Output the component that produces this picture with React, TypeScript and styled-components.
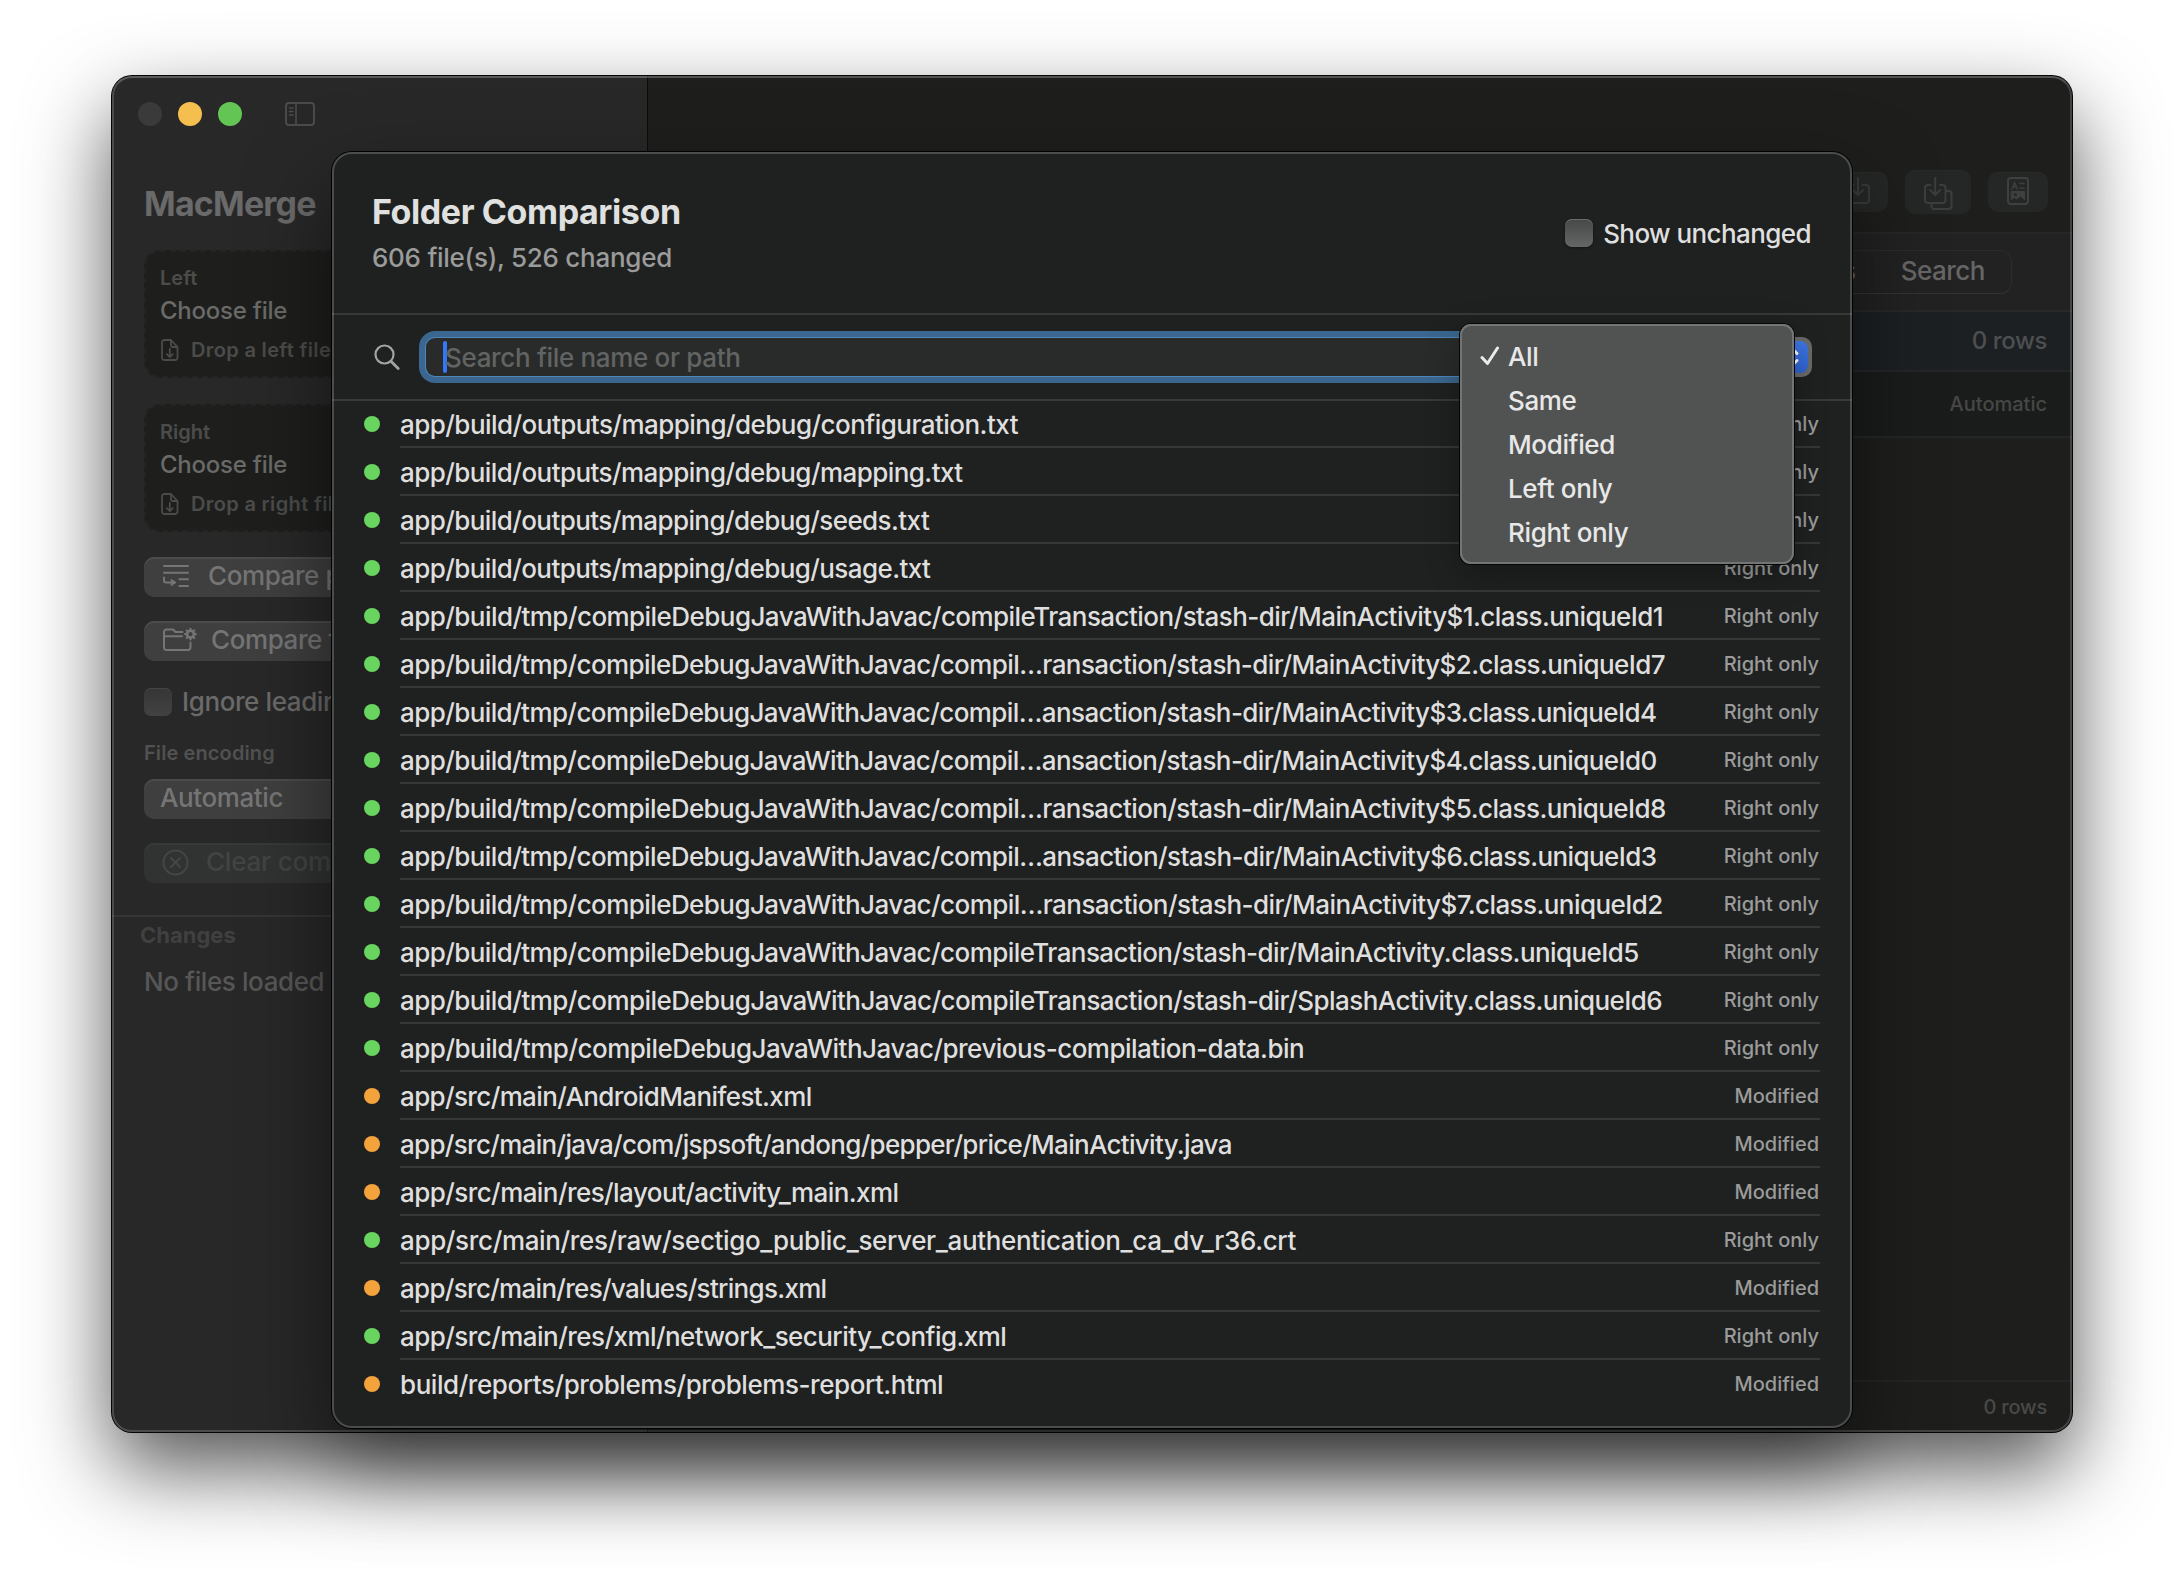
import React from "react";
import styled, { createGlobalStyle } from "styled-components";

const GlobalStyle = createGlobalStyle`
  * { box-sizing: border-box; }
  html, body { margin: 0; padding: 0; background: #fff; }
  body { font-family: Inter, "Liberation Sans", sans-serif; overflow: hidden; }
`;

const Desktop = styled.div`
  position: relative;
  width: 2184px;
  height: 1580px;
  padding: 76px 112px 148px;
  background: #fff;
  overflow: hidden;
`;

const AppWindow = styled.div`
  position: relative;
  display: flex;
  width: 1960px;
  height: 1356px;
  border-radius: 20px;
  background: #1e1f1c;
  box-shadow: 0 0 0 1px #050505, 0 36px 84px rgba(0, 0, 0, 0.68);
  &::after {
    content: "";
    position: absolute;
    inset: 0;
    border-radius: 20px;
    border: 2px solid rgba(255, 255, 255, 0.17);
    border-top-color: rgba(255, 255, 255, 0.24);
    pointer-events: none;
  }
`;

const Text = styled.span<{ $size?: number; $line?: number; $color?: string; $weight?: number; $spacing?: number }>`
  font-size: ${(p) => p.$size ?? 26}px;
  line-height: ${(p) => p.$line ?? 32}px;
  color: ${(p) => p.$color ?? "#dfdfdf"};
  font-weight: ${(p) => p.$weight ?? 450};
  letter-spacing: ${(p) => p.$spacing ?? 0}px;
  white-space: nowrap;
`;

/* ---------- sidebar ---------- */

const Sidebar = styled.aside`
  display: flex;
  flex-direction: column;
  width: 536px;
  background: #282828;
  border-right: 1px solid #0c0c0c;
  border-radius: 20px 0 0 20px;
`;

const TitleBar = styled.div`
  display: flex;
  align-items: center;
  gap: 16px;
  height: 76px;
  padding-left: 26px;
  svg { margin-left: 27px; }
`;

const Light = styled.i<{ $color: string }>`
  width: 24px;
  height: 24px;
  border-radius: 50%;
  background: ${(p) => p.$color};
`;

const Controls = styled.div`
  display: flex;
  flex-direction: column;
  padding: 32px 32px 32px;
  border-bottom: 2px solid #343535;
`;

const DropCard = styled.div<{ $top: number }>`
  display: flex;
  flex-direction: column;
  height: 128px;
  margin-top: ${(p) => p.$top}px;
  padding: 14px 14px 0;
  border: 2px dashed #242523;
  border-radius: 16px;
  background: #1e1f1d;
`;

const CardTitle = styled(Text)`
  margin-top: 6px;
`;

const DropHint = styled.div`
  display: flex;
  align-items: center;
  gap: 12px;
  margin-top: 12px;
  padding-left: 1px;
`;

const SideButton = styled.div<{ $top: number; $dim?: boolean; $gap?: number }>`
  display: flex;
  align-items: center;
  gap: ${(p) => p.$gap ?? 0}px;
  height: 40px;
  margin-top: ${(p) => p.$top}px;
  padding: 0 ${(p) => (p.$gap ? 18 : 16)}px 2px;
  border-radius: 10px;
  background: ${(p) => (p.$dim ? "#303332" : "#3f3f3f")};
  box-shadow: inset 0 2px 0 ${(p) => (p.$dim ? "#363938" : "#4b4b4b")};
`;

const CheckRow = styled.div<{ $top?: number; $gap: number }>`
  display: flex;
  align-items: center;
  gap: ${(p) => p.$gap}px;
  height: 28px;
  margin-top: ${(p) => p.$top ?? 0}px;
`;

const Checkbox = styled.i<{ $bright?: boolean }>`
  width: 28px;
  height: 28px;
  border-radius: 7px;
  background: ${(p) => (p.$bright ? "linear-gradient(#464747, #656666)" : "linear-gradient(#363636, #424242)")};
  box-shadow: ${(p) => (p.$bright ? "inset 0 1px 0 #6a6b6a, 0 1px 3px rgba(0,0,0,.4)" : "inset 0 1px 0 #444")};
`;

const FieldLabel = styled(Text)`
  margin: 25px 0 14px;
`;

const Changes = styled.div`
  display: flex;
  flex-direction: column;
  gap: 17px;
  padding: 4px 0 0 32px;
  span:first-child { margin-left: -4px; }
`;

/* ---------- main pane ---------- */

const Main = styled.main`
  display: flex;
  flex-direction: column;
  flex: 1;
  border-radius: 0 20px 20px 0;
  overflow: hidden;
`;

const Toolbar = styled.div`
  display: flex;
  align-items: center;
  justify-content: flex-end;
  gap: 17px;
  height: 158px;
  padding: 76px 24px 0 0;
  border-bottom: 2px solid #252726;
`;

const ToolButton = styled.div<{ $large?: boolean }>`
  display: flex;
  align-items: center;
  justify-content: center;
  width: ${(p) => (p.$large ? 66 : 60)}px;
  height: ${(p) => (p.$large ? 44 : 40)}px;
  border-radius: 10px;
  background: #252726;
  box-shadow: inset 0 1px 0 #292b2a;
`;

const TabBar = styled.div`
  display: flex;
  align-items: center;
  justify-content: flex-end;
  height: 78px;
  padding-right: 60px;
  background: #222222;
  border-bottom: 2px solid #272929;
`;

const Tabs = styled.div`
  display: flex;
  align-items: center;
  height: 44px;
  border: 1px solid #2b2c2c;
  border-bottom-color: #343434;
  border-radius: 12px;
`;

const Tab = styled.div<{ $first?: boolean }>`
  padding: ${(p) => (p.$first ? "0 15px 0 28px" : "0 26px 0 28px")};
  border-left: ${(p) => (p.$first ? "0" : "2px solid #202020")};
  line-height: 30px;
`;

const InfoRow = styled.div<{ $bg: string; $height: number }>`
  display: flex;
  align-items: center;
  justify-content: flex-end;
  height: ${(p) => p.$height}px;
  padding-right: 25px;
  background: ${(p) => p.$bg};
  border-bottom: 2px solid #252726;
`;

const Footer = styled.div`
  display: flex;
  align-items: center;
  justify-content: flex-end;
  height: 52px;
  margin-top: auto;
  padding: 0 25px 1px 0;
  border-top: 2px solid #242525;
`;

/* ---------- sheet ---------- */

const Sheet = styled.section`
  position: absolute;
  left: 332px;
  top: 152px;
  width: 1520px;
  height: 1276px;
  display: flex;
  flex-direction: column;
  border-radius: 20px;
  background: #1f2120;
  box-shadow: 0 0 0 1px #000, 0 36px 84px rgba(0, 0, 0, 0.5);
  &::after {
    content: "";
    position: absolute;
    inset: 0;
    border-radius: 20px;
    border: 2px solid rgba(255, 255, 255, 0.2);
    pointer-events: none;
  }
`;

const SheetHeader = styled.header`
  display: flex;
  justify-content: space-between;
  height: 163px;
  padding: 40px 41px 0 40px;
  border-bottom: 2px solid #373938;
  ${CheckRow} { margin-top: 27px; }
  ${CheckRow} ${Text} { padding-top: 1px; }
`;

const Heading = styled.div`
  display: flex;
  flex-direction: column;
  gap: 10px;
`;

const FilterRow = styled.div`
  display: flex;
  align-items: center;
  height: 86px;
  padding: 0 40px 0 42px;
  border-bottom: 2px solid #373938;
`;

const SearchField = styled.div`
  display: flex;
  align-items: center;
  width: 1052px;
  height: 38px;
  margin-left: 26px;
  padding-left: 17px;
  border-radius: 9px;
  background: #292b2a;
  box-shadow: 0 0 0 1px #4f86b8, 0 0 0 7px #3a668f;
  ${Text} { padding-top: 1px; }
`;

const Caret = styled.i`
  width: 4px;
  height: 32px;
  margin-right: -2px;
  border-radius: 2px;
  background: #3478f6;
`;

const PopUp = styled.div`
  display: flex;
  justify-content: flex-end;
  align-items: center;
  width: 300px;
  height: 40px;
  margin-left: auto;
  padding-right: 4px;
  border-radius: 10px;
  background: #6a6b6a;
`;

const PopUpArrows = styled.div`
  display: flex;
  align-items: center;
  justify-content: center;
  width: 32px;
  height: 32px;
  border-radius: 8px;
  background: linear-gradient(#3f78e8, #2f64d2);
`;

const List = styled.div`
  display: flex;
  flex-direction: column;
  margin-top: -1px;
  padding: 0 32px;
`;

const Row = styled.div`
  display: flex;
  align-items: center;
  gap: 20px;
  height: 48px;
`;

const Dot = styled.i<{ $kind: string }>`
  width: 16px;
  height: 16px;
  border-radius: 50%;
  background: ${(p) => (p.$kind === "Modified" ? "#f2a33c" : "#69d45f")};
`;

const RowBody = styled.div`
  display: flex;
  align-items: center;
  justify-content: space-between;
  flex: 1;
  height: 48px;
  padding-right: 1px;
  box-shadow: inset 0 -2px 0 #363837;
  ${Row}:last-child & { box-shadow: none; }
`;

const Path = styled(Text)`
  padding-top: 2px;
`;

const Menu = styled.div`
  position: absolute;
  left: 1460px;
  top: 324px;
  width: 334px;
  height: 240px;
  display: flex;
  flex-direction: column;
  padding: 10px 19px;
  border-radius: 11px;
  background: #515352;
  box-shadow: inset 0 0 0 2px #737574, 0 0 0 1px #050505, 0 10px 34px rgba(0, 0, 0, 0.3);
`;

const MenuItem = styled.div`
  display: flex;
  align-items: center;
  height: 44px;
  ${Text} { padding-top: 1px; }
`;

const CheckSlot = styled.div`
  display: flex;
  width: 29px;
  padding-left: 1px;
`;

const Stroke = ({ w, h, color, sw = 2, children }: { w: number; h: number; color: string; sw?: number; children: React.ReactNode }) => (
  <svg width={w} height={h} viewBox={`0 0 ${w} ${h}`} fill="none" stroke={color} strokeWidth={sw} strokeLinecap="round" strokeLinejoin="round">
    {children}
  </svg>
);

const DocArrow = () => (
  <Stroke w={18} h={22} color="#4b4b4a" sw={1.8}>
    <path d="M3.5 1H10l6.5 7v10.5a2.5 2.5 0 0 1-2.5 2.5H3.5A2.5 2.5 0 0 1 1 18.5v-15A2.5 2.5 0 0 1 3.5 1zM10 1v5.5a1.5 1.5 0 0 0 1.5 1.5h5M8.8 10v8M5.8 15.2l3 2.900 3-2.900" />
  </Stroke>
);

/* path, status, letter tracking */
const files: [string, string, number][] = [
  ["app/build/outputs/mapping/debug/configuration.txt", "Right only", -0.54],
  ["app/build/outputs/mapping/debug/mapping.txt", "Right only", -0.56],
  ["app/build/outputs/mapping/debug/seeds.txt", "Right only", -0.58],
  ["app/build/outputs/mapping/debug/usage.txt", "Right only", -0.58],
  ["app/build/tmp/compileDebugJavaWithJavac/compileTransaction/stash-dir/MainActivity$1.class.uniqueId1", "Right only", -0.55],
  ["app/build/tmp/compileDebugJavaWithJavac/compil…ransaction/stash-dir/MainActivity$2.class.uniqueId7", "Right only", -0.58],
  ["app/build/tmp/compileDebugJavaWithJavac/compil…ansaction/stash-dir/MainActivity$3.class.uniqueId4", "Right only", -0.59],
  ["app/build/tmp/compileDebugJavaWithJavac/compil…ansaction/stash-dir/MainActivity$4.class.uniqueId0", "Right only", -0.59],
  ["app/build/tmp/compileDebugJavaWithJavac/compil…ransaction/stash-dir/MainActivity$5.class.uniqueId8", "Right only", -0.58],
  ["app/build/tmp/compileDebugJavaWithJavac/compil…ansaction/stash-dir/MainActivity$6.class.uniqueId3", "Right only", -0.58],
  ["app/build/tmp/compileDebugJavaWithJavac/compil…ransaction/stash-dir/MainActivity$7.class.uniqueId2", "Right only", -0.57],
  ["app/build/tmp/compileDebugJavaWithJavac/compileTransaction/stash-dir/MainActivity.class.uniqueId5", "Right only", -0.57],
  ["app/build/tmp/compileDebugJavaWithJavac/compileTransaction/stash-dir/SplashActivity.class.uniqueId6", "Right only", -0.56],
  ["app/build/tmp/compileDebugJavaWithJavac/previous-compilation-data.bin", "Right only", -0.51],
  ["app/src/main/AndroidManifest.xml", "Modified", -0.63],
  ["app/src/main/java/com/jspsoft/andong/pepper/price/MainActivity.java", "Modified", -0.69],
  ["app/src/main/res/layout/activity_main.xml", "Modified", -0.57],
  ["app/src/main/res/raw/sectigo_public_server_authentication_ca_dv_r36.crt", "Right only", -0.35],
  ["app/src/main/res/values/strings.xml", "Modified", -0.7],
  ["app/src/main/res/xml/network_security_config.xml", "Right only", -0.55],
  ["build/reports/problems/problems-report.html", "Modified", -0.44],
];

const filters = ["All", "Same", "Modified", "Left only", "Right only"];

const gearTeeth = [0, 45, 90, 135, 180, 225, 270, 315];

const sides = [
  { name: "Left", hint: "Drop a left file" },
  { name: "Right", hint: "Drop a right file" },
];

export default function App() {
  return (
    <Desktop>
      <GlobalStyle />
      <AppWindow>
        <Sidebar>
          <TitleBar>
            <Light $color="#3a3a3a" />
            <Light $color="#f5bf4f" />
            <Light $color="#62c554" />
            <Stroke w={30} h={24} color="#4b4b4b">
              <rect x="1" y="1" width="28" height="22" rx="3" />
              <path d="M11 1v22M4.5 6h3.500M4.5 9.500h3.500M4.5 13h3.500" strokeWidth="1.6" />
            </Stroke>
          </TitleBar>
          <Controls>
            <Text $size={34} $line={40} $weight={700} $color="#6a6a6a" $spacing={-0.8}>MacMerge</Text>
            {sides.map((side) => (
              <DropCard key={side.name} $top={26}>
                <Text $size={20} $line={24} $weight={600} $color="#4c4c4b">{side.name}</Text>
                <CardTitle $size={24} $line={30} $color="#6a6a69" $spacing={-0.25}>Choose file</CardTitle>
                <DropHint>
                  <DocArrow />
                  <Text $size={20} $line={24} $weight={600} $color="#4c4c4b" $spacing={0.35}>{side.hint}</Text>
                </DropHint>
              </DropCard>
            ))}
            <SideButton $top={25} $gap={18}>
              <Stroke w={28} h={24} color="#757575">
                <path d="M2 2h24M2 8.700h24M17.500 15.300h8.500M17.500 22h8.500" />
                <path d="M2 13.500v3a2 2 0 0 0 2 2h6" />
                <path d="M9.500 15.500l4.500 3-4.500 3z" fill="#757575" strokeWidth="1" />
              </Stroke>
              <Text $color="#757575" $spacing={-0.4}>Compare panes</Text>
            </SideButton>
            <SideButton $top={24} $gap={14}>
              <Stroke w={35} h={26} color="#757575">
                <path d="M20.500 5h-7l-2.500-2.500H4.500A2.500 2.500 0 0 0 2 5v15.500A2.500 2.500 0 0 0 4.500 23h21.500a2.500 2.500 0 0 0 2.500-2.500V15.500M2 9.200h18" />
                <circle cx="28.500" cy="7.200" r="3.400" strokeWidth="2.600" />
                {gearTeeth.map((a) => (
                  <path key={a} d="M28.500 2.400V1.900" strokeWidth="2.200" transform={`rotate(${a} 28.500 7.200)`} />
                ))}
              </Stroke>
              <Text $color="#757575" $spacing={-0.4}>Compare folders</Text>
            </SideButton>
            <CheckRow $top={27} $gap={10}>
              <Checkbox />
              <Text $color="#6a6a6a" $spacing={-0.4}>Ignore leading</Text>
            </CheckRow>
            <FieldLabel $size={20} $line={24} $weight={600} $color="#515151" $spacing={0.1}>File encoding</FieldLabel>
            <SideButton $top={0}>
              <Text $color="#757575" $spacing={-0.4}>Automatic</Text>
            </SideButton>
            <SideButton $top={24} $gap={17} $dim>
              <Stroke w={27} h={27} color="#444646">
                <circle cx="13.500" cy="13.500" r="12" />
                <path d="M9 9l9 9M18 9l-9 9" />
              </Stroke>
              <Text $color="#424444" $spacing={-0.2}>Clear comparison</Text>
            </SideButton>
          </Controls>
          <Changes>
            <Text $size={22} $line={28} $weight={650} $color="#404040">Changes</Text>
            <Text $color="#575757" $spacing={-0.4}>No files loaded</Text>
          </Changes>
        </Sidebar>
        <Main>
          <Toolbar>
            <ToolButton>
              <Stroke w={28} h={32} color="#383a39">
                <path d="M9.500 9H6a3 3 0 0 0-3 3v12a3 3 0 0 0 3 3h16a3 3 0 0 0 3-3V12a3 3 0 0 0-3-3h-3.500M14 2v17M9 14l5 5 5-5" />
              </Stroke>
            </ToolButton>
            <ToolButton $large>
              <Stroke w={30} h={36} color="#3c3e3d">
                <path d="M7.500 11H5a3 3 0 0 0-3 3v12a3 3 0 0 0 3 3h14.500a3 3 0 0 0 3-3V14a3 3 0 0 0-3-3H17M12.200 4v17M7.200 16l5 5 5-5" />
                <path d="M23 17h2.500a3 3 0 0 1 3 3v12a3 3 0 0 1-3 3H11.500a3 3 0 0 1-3-3v-3" />
              </Stroke>
            </ToolButton>
            <ToolButton>
              <Stroke w={22} h={30} color="#3e403f">
                <rect x="1" y="1" width="20" height="26" rx="3" />
                <path d="M5 12l2.600-6.500 2.600 6.500M6 10h3.200M13 6.500h4M13 11h4" strokeWidth="1.5" />
                <path d="M4.500 14.500h13v8l-4-3.500-4 3-2-1.500-3 2z" fill="#3e403f" strokeWidth="1" />
                <circle cx="8.500" cy="17.500" r="1.500" fill="#242625" stroke="none" />
              </Stroke>
            </ToolButton>
          </Toolbar>
          <TabBar>
            <Tabs>
              <Tab $first><Text $line={30} $color="#666" $spacing={-0.4}>Changes</Text></Tab>
              <Tab><Text $line={30} $color="#666" $spacing={-0.5}>Search</Text></Tab>
            </Tabs>
          </TabBar>
          <InfoRow $bg="#1c2023" $height={60}><Text $size={24} $color="#4d4f50" $spacing={-0.4}>0 rows</Text></InfoRow>
          <InfoRow $bg="#1a1c1b" $height={66}><Text $size={20} $color="#464746" $weight={500}>Automatic</Text></InfoRow>
          <Footer><Text $size={20} $color="#484947" $weight={500} $spacing={-0.2}>0 rows</Text></Footer>
        </Main>
      </AppWindow>

      <Sheet>
        <SheetHeader>
          <Heading>
            <Text $size={34} $line={40} $weight={700} $color="#dfe0df" $spacing={-0.4}>Folder Comparison</Text>
            <Text $color="#9a9b9a" $spacing={-0.27}>606 file(s), 526 changed</Text>
          </Heading>
          <CheckRow $gap={10}>
            <Checkbox $bright />
            <Text $spacing={-0.58}>Show unchanged</Text>
          </CheckRow>
        </SheetHeader>
        <FilterRow>
          <Stroke w={26} h={27} color="#a2a3a2" sw={2.2}>
            <circle cx="10.500" cy="10.500" r="9" />
            <path d="M17.200 17.500l7 7" strokeWidth="2.8" />
          </Stroke>
          <SearchField>
            <Caret />
            <Text $color="#626463" $spacing={-0.33}>Search file name or path</Text>
          </SearchField>
          <PopUp>
            <PopUpArrows>
              <Stroke w={16} h={24} color="#fff" sw={3}>
                <path d="M3 8.500l5-5 5 5M3 15.500l5 5 5-5" />
              </Stroke>
            </PopUpArrows>
          </PopUp>
        </FilterRow>
        <List>
          {files.map(([path, kind, tracking]) => (
            <Row key={path}>
              <Dot $kind={kind} />
              <RowBody>
                <Path $spacing={tracking}>{path}</Path>
                <Text $size={20} $color="#9a9b9a" $weight={480}>{kind}</Text>
              </RowBody>
            </Row>
          ))}
        </List>
      </Sheet>

      <Menu>
        {filters.map((name, i) => (
          <MenuItem key={name}>
            <CheckSlot>
              {i === 0 && (
                <Stroke w={20} h={20} color="#ebebeb" sw={3}>
                  <path d="M2 11.500l5.500 6L17.500 2" />
                </Stroke>
              )}
            </CheckSlot>
            <Text $color="#e8e8e8" $spacing={-0.37}>{name}</Text>
          </MenuItem>
        ))}
      </Menu>
    </Desktop>
  );
}
